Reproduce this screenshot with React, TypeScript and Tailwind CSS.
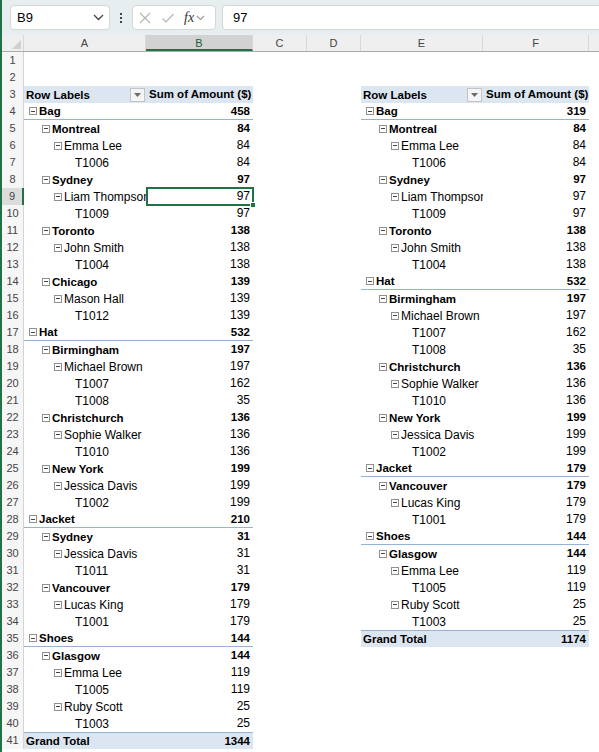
import React from "react";

type Kind = "cat" | "city" | "name" | "id";

type PivotRow = {
  label: string;
  value: number;
  kind: Kind;
};

const leftRows: PivotRow[] = [
  { label: "Bag", value: 458, kind: "cat" },
  { label: "Montreal", value: 84, kind: "city" },
  { label: "Emma Lee", value: 84, kind: "name" },
  { label: "T1006", value: 84, kind: "id" },
  { label: "Sydney", value: 97, kind: "city" },
  { label: "Liam Thompson", value: 97, kind: "name" },
  { label: "T1009", value: 97, kind: "id" },
  { label: "Toronto", value: 138, kind: "city" },
  { label: "John Smith", value: 138, kind: "name" },
  { label: "T1004", value: 138, kind: "id" },
  { label: "Chicago", value: 139, kind: "city" },
  { label: "Mason Hall", value: 139, kind: "name" },
  { label: "T1012", value: 139, kind: "id" },
  { label: "Hat", value: 532, kind: "cat" },
  { label: "Birmingham", value: 197, kind: "city" },
  { label: "Michael Brown", value: 197, kind: "name" },
  { label: "T1007", value: 162, kind: "id" },
  { label: "T1008", value: 35, kind: "id" },
  { label: "Christchurch", value: 136, kind: "city" },
  { label: "Sophie Walker", value: 136, kind: "name" },
  { label: "T1010", value: 136, kind: "id" },
  { label: "New York", value: 199, kind: "city" },
  { label: "Jessica Davis", value: 199, kind: "name" },
  { label: "T1002", value: 199, kind: "id" },
  { label: "Jacket", value: 210, kind: "cat" },
  { label: "Sydney", value: 31, kind: "city" },
  { label: "Jessica Davis", value: 31, kind: "name" },
  { label: "T1011", value: 31, kind: "id" },
  { label: "Vancouver", value: 179, kind: "city" },
  { label: "Lucas King", value: 179, kind: "name" },
  { label: "T1001", value: 179, kind: "id" },
  { label: "Shoes", value: 144, kind: "cat" },
  { label: "Glasgow", value: 144, kind: "city" },
  { label: "Emma Lee", value: 119, kind: "name" },
  { label: "T1005", value: 119, kind: "id" },
  { label: "Ruby Scott", value: 25, kind: "name" },
  { label: "T1003", value: 25, kind: "id" },
];

const rightRows: PivotRow[] = [
  { label: "Bag", value: 319, kind: "cat" },
  { label: "Montreal", value: 84, kind: "city" },
  { label: "Emma Lee", value: 84, kind: "name" },
  { label: "T1006", value: 84, kind: "id" },
  { label: "Sydney", value: 97, kind: "city" },
  { label: "Liam Thompson", value: 97, kind: "name" },
  { label: "T1009", value: 97, kind: "id" },
  { label: "Toronto", value: 138, kind: "city" },
  { label: "John Smith", value: 138, kind: "name" },
  { label: "T1004", value: 138, kind: "id" },
  { label: "Hat", value: 532, kind: "cat" },
  { label: "Birmingham", value: 197, kind: "city" },
  { label: "Michael Brown", value: 197, kind: "name" },
  { label: "T1007", value: 162, kind: "id" },
  { label: "T1008", value: 35, kind: "id" },
  { label: "Christchurch", value: 136, kind: "city" },
  { label: "Sophie Walker", value: 136, kind: "name" },
  { label: "T1010", value: 136, kind: "id" },
  { label: "New York", value: 199, kind: "city" },
  { label: "Jessica Davis", value: 199, kind: "name" },
  { label: "T1002", value: 199, kind: "id" },
  { label: "Jacket", value: 179, kind: "cat" },
  { label: "Vancouver", value: 179, kind: "city" },
  { label: "Lucas King", value: 179, kind: "name" },
  { label: "T1001", value: 179, kind: "id" },
  { label: "Shoes", value: 144, kind: "cat" },
  { label: "Glasgow", value: 144, kind: "city" },
  { label: "Emma Lee", value: 119, kind: "name" },
  { label: "T1005", value: 119, kind: "id" },
  { label: "Ruby Scott", value: 25, kind: "name" },
  { label: "T1003", value: 25, kind: "id" },
];

const indent: Record<Kind, string> = {
  cat: "pl-[5px]",
  city: "pl-[18px]",
  name: "pl-[30px]",
  id: "pl-[51px]",
};

const Toggle = () => (
  <span className="mr-[2px] inline-flex h-[8px] w-[8px] shrink-0 items-center justify-center border border-[#909090] bg-white">
    <span className="h-px w-[4px] bg-[#444]" />
  </span>
);

const DropButton = () => (
  <span className="flex h-[14px] w-[15px] items-center justify-center border border-[#c4c4c4] bg-[#f4f4f4]">
    <svg width="7" height="4" viewBox="0 0 7 4">
      <path d="M0 0h7L3.5 4z" fill="#6b6b6b" />
    </svg>
  </span>
);

// one pivot table's two cells for a given sheet row
const PivotCells = ({
  rows,
  row,
  total,
  labelW,
  valueW,
  selected,
}: {
  rows: PivotRow[];
  row: number;
  total: number;
  labelW: string;
  valueW: string;
  selected?: boolean;
}) => {
  const idx = row - 4;
  if (row === 3) {
    return (
      <>
        <div className={`${labelW} flex items-center justify-between bg-[#dce6f1] pl-[2px] pr-px font-bold`}>
          <span>Row Labels</span>
          <DropButton />
        </div>
        <div className={`${valueW} bg-[#dce6f1] pl-[3px] font-bold whitespace-nowrap`}>Sum of Amount ($)</div>
      </>
    );
  }
  if (idx === rows.length) {
    return (
      <>
        <div className={`${labelW} border-t border-[#95b3d7] bg-[#dce6f1] pl-[2px] font-bold`}>Grand Total</div>
        <div className={`${valueW} border-t border-[#95b3d7] bg-[#dce6f1] pr-[3px] text-right font-bold`}>{total}</div>
      </>
    );
  }
  const r = idx >= 0 && idx < rows.length ? rows[idx] : null;
  if (!r) {
    return (
      <>
        <div className={labelW} />
        <div className={valueW} />
      </>
    );
  }
  const bold = r.kind === "cat" || r.kind === "city";
  const line = r.kind === "cat" ? "border-b border-[#95b3d7]" : "";
  const weight = bold ? "font-bold" : "text-[12px]";
  return (
    <>
      <div className={`${labelW} ${line} ${indent[r.kind]} flex items-center overflow-hidden whitespace-nowrap ${weight}`}>
        {r.kind !== "id" && <Toggle />}
        <span>{r.label}</span>
      </div>
      <div className={`${valueW} ${line} relative pr-[3px] text-right ${weight}`}>
        {r.value}
        {selected && (
          <span className="absolute -top-px left-0 -right-px -bottom-px border-2 border-[#217346]">
            <span className="absolute -right-[4px] -bottom-[4px] h-[6px] w-[6px] border border-white bg-[#217346]" />
          </span>
        )}
      </div>
    </>
  );
};

const columns = [
  { name: "A", w: "w-[122px]" },
  { name: "B", w: "w-[107px]" },
  { name: "C", w: "w-[54px]" },
  { name: "D", w: "w-[54px]" },
  { name: "E", w: "w-[122px]" },
  { name: "F", w: "w-[106px]" },
];

const ToolbarIcon = ({ d }: { d: string }) => (
  <svg width="14" height="14" viewBox="0 0 14 14" fill="none" stroke="#b5b5b5" strokeWidth="1.2">
    <path d={d} />
  </svg>
);

export default function App() {
  const sheetRows = Array.from({ length: 41 }, (_, i) => i + 1);

  return (
    <div
      className="h-[752px] w-[599px] overflow-hidden border-l-2 border-[#217346] bg-white text-[11.5px] text-black"
      style={{ fontFamily: '"Liberation Sans", Arial, sans-serif' }}
    >
      {/* formula bar */}
      <div className="flex h-[35px] items-center bg-[#e6eef0] pl-[8px]">
        <div className="flex h-[25px] w-[100px] items-center justify-between rounded-[4px] border border-[#d6d6d6] bg-white pl-[6px] pr-[5px] text-[13px]">
          <span>B9</span>
          <svg width="11" height="7" viewBox="0 0 11 7" fill="none" stroke="#444" strokeWidth="1.3">
            <path d="M1 1l4.5 4.5L10 1" />
          </svg>
        </div>
        <div className="flex w-[22px] flex-col items-center gap-[2px]">
          <span className="h-[2px] w-[2px] bg-[#444]" />
          <span className="h-[2px] w-[2px] bg-[#444]" />
          <span className="h-[2px] w-[2px] bg-[#444]" />
        </div>
        <div className="flex h-[25px] w-[84px] items-center gap-[9px] rounded-[4px] border border-[#d6d6d6] bg-white pl-[5px]">
          <ToolbarIcon d="M2 2l10 10M12 2L2 12" />
          <ToolbarIcon d="M1.5 7.5l3.5 3.5L12.5 3" />
          <span className="flex items-center gap-[2px]">
            <span className="text-[14px] italic text-[#333]" style={{ fontFamily: '"Liberation Serif", serif' }}>
              fx
            </span>
            <svg width="9" height="6" viewBox="0 0 9 6" fill="none" stroke="#999" strokeWidth="1.1">
              <path d="M1 1l3.5 3.5L8 1" />
            </svg>
          </span>
        </div>
        <div className="ml-[6px] flex h-[25px] flex-1 items-center rounded-l-[4px] border border-r-0 border-[#d6d6d6] bg-white pl-[10px] text-[13px]">
          97
        </div>
      </div>

      {/* column headers */}
      <div className="flex h-[17px] border-b border-[#ababab] bg-[#efefef] text-[11px] leading-[16px] text-[#444]">
        <div className="relative w-[22px] border-r border-[#d8d8d8]">
          <svg className="absolute right-[2px] bottom-[2px]" width="9" height="9" viewBox="0 0 9 9">
            <path d="M9 0v9H0z" fill="#d0d0d0" />
          </svg>
        </div>
        {columns.map((c) => (
          <div
            key={c.name}
            className={`${c.w} border-r border-[#d8d8d8] text-center ${
              c.name === "B" ? "border-b-2 border-b-[#217346] bg-[#d2d2d2] text-[#1e5c3a]" : ""
            }`}
          >
            {c.name}
          </div>
        ))}
        <div className="flex-1" />
      </div>

      {/* sheet */}
      {sheetRows.map((n) => (
        <div key={n} className="flex h-[17px] leading-[16px]">
          <div
            className={`w-[22px] text-center text-[11px] text-[#444] ${
              n === 9 ? "border-r-2 border-[#217346] bg-[#dcdcdc]" : "border-r border-[#d4d4d4] bg-[#f6f6f6]"
            }`}
          >
            {n}
          </div>
          <PivotCells rows={leftRows} row={n} total={1344} labelW="w-[122px]" valueW="w-[107px]" selected={n === 9} />
          <div className="w-[54px]" />
          <div className="w-[54px]" />
          <PivotCells rows={rightRows} row={n} total={1174} labelW="w-[122px]" valueW="w-[106px]" />
          <div className="flex-1" />
        </div>
      ))}
    </div>
  );
}
